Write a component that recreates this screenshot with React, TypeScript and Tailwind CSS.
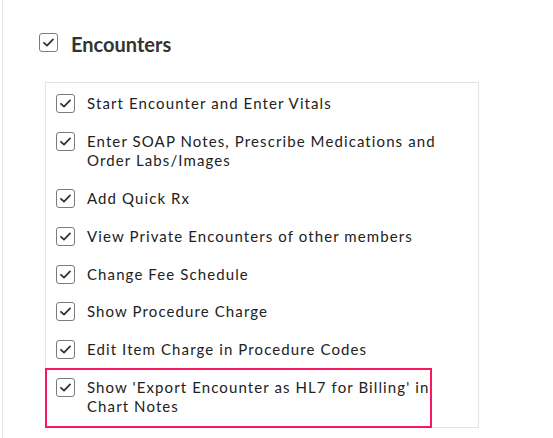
import React from 'react'

const items = [
  'Start Encounter and Enter Vitals',
  'Enter SOAP Notes, Prescribe Medications and Order Labs/Images',
  'Add Quick Rx',
  'View Private Encounters of other members',
  'Change Fee Schedule',
  'Show Procedure Charge',
  'Edit Item Charge in Procedure Codes',
  "Show 'Export Encounter as HL7 for Billing' in Chart Notes",
]

function Check() {
  return (
    <span className="flex h-[19px] w-[19px] shrink-0 items-center justify-center rounded-[3px] border border-[#7b7b7b] bg-white">
      <svg width="13" height="13" viewBox="0 0 13 13" fill="none">
        <polyline
          points="2,6.8 5,9.6 11,3.4"
          stroke="#333"
          strokeWidth="1.8"
          strokeLinecap="round"
          strokeLinejoin="round"
        />
      </svg>
    </span>
  )
}

export default function App() {
  return (
    <div
      className="ml-[2px] min-h-screen border-l border-[#e6e6ef] bg-white pl-[36px] pt-[33px]"
      style={{ fontFamily: 'Lato, "Noto Sans", sans-serif' }}
    >
      <div className="flex items-start gap-[13px]">
        <Check />
        <span className="-mt-[1px] text-[20px] font-bold leading-[24px] text-[#333]">Encounters</span>
      </div>
      <div className="ml-[6px] mt-[26px] w-[434px] border border-[#e3e3e3] pt-[2px]">
        {items.map((label, i) => {
          const last = i === items.length - 1
          return (
            <div
              key={label}
              className={
                'relative -ml-px flex items-start gap-[12px] border-y-2 border-transparent pl-[11px] pr-[18px] ' +
                (last ? '-mb-px pb-[10px] pt-[7.4px]' : 'py-[7.4px]')
              }
            >
              <Check />
              <span className="text-[15px] leading-[19px] tracking-[1.1px] text-[#222]">{label}</span>
              {last && (
                <div className="pointer-events-none absolute -top-[2px] -bottom-[2px] left-0 w-[387px] border-2 border-[#fb1660]" />
              )}
            </div>
          )
        })}
      </div>
    </div>
  )
}
